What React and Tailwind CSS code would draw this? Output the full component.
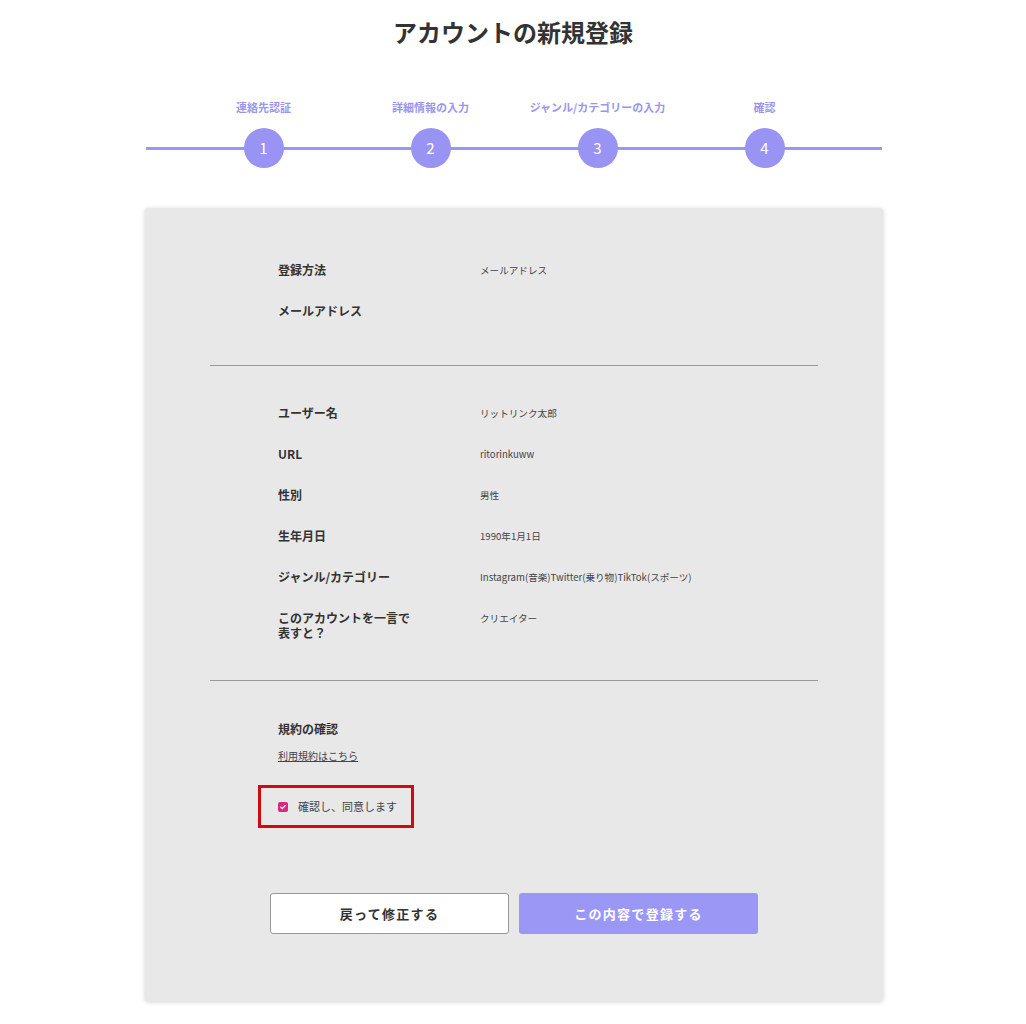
import React from "react";

const steps = ["連絡先認証", "詳細情報の入力", "ジャンル/カテゴリーの入力", "確認"];

const accountRows = [
  { label: "登録方法", value: "メールアドレス" },
  { label: "メールアドレス", value: "" },
];

const profileRows = [
  { label: "ユーザー名", value: "リットリンク太郎" },
  { label: "URL", value: "ritorinkuww" },
  { label: "性別", value: "男性" },
  { label: "生年月日", value: "1990年1月1日" },
  { label: "ジャンル/カテゴリー", value: "Instagram(音楽)Twitter(乗り物)TikTok(スポーツ)" },
];

const Row = ({ label, value }) => (
  <div className="grid grid-cols-[202px_1fr] items-center h-[20px]">
    <span className="text-[12px] font-bold text-[#333] leading-[20px]">{label}</span>
    <span className="text-[9.6px] text-[#444] leading-[20px]">{value}</span>
  </div>
);

const App = () => {
  return (
    <div
      className="w-[1026px] min-h-[1024px] bg-white"
      style={{ fontFamily: '"Noto Sans CJK JP", "Noto Sans", sans-serif' }}
    >
      <h1 className="pt-[14px] text-center text-[24px] font-bold leading-[36px] text-[#333]">
        アカウントの新規登録
      </h1>

      {/* stepper */}
      <div className="relative ml-[146px] mt-[49px] w-[736px]">
        <div className="absolute left-0 right-0 top-[48px] h-[3px] bg-[#9b97f0]" />
        <div className="relative mx-auto grid w-[668px] grid-cols-4">
          {steps.map((s, i) => (
            <div key={s} className="flex flex-col items-center">
              <span className="h-[16px] text-[11px] font-bold leading-[16px] text-[#9a96ee]">
                {s}
              </span>
              <div className="mt-[13px] flex h-[40px] w-[40px] items-center justify-center rounded-full bg-[#9994f3] text-[15px] text-white">
                {i + 1}
              </div>
            </div>
          ))}
        </div>
      </div>

      {/* card */}
      <div className="ml-[145px] mt-[40px] h-[793px] w-[738px] rounded-[3px] bg-[#e8e8e8] px-[65px] pt-[52px] shadow-[0_1px_5px_rgba(0,0,0,0.18)]">
        <div className="flex flex-col gap-[21px] pl-[68px]">
          {accountRows.map((r) => (
            <Row key={r.label} {...r} />
          ))}
        </div>

        <div className="mt-[44px] h-px bg-[#9a9a9a]" />

        <div className="mt-[37px] flex flex-col gap-[21px] pl-[68px]">
          {profileRows.map((r) => (
            <Row key={r.label} {...r} />
          ))}
          <div className="grid grid-cols-[202px_1fr] items-start">
            <span className="max-w-[135px] pt-[2px] text-[12px] font-bold leading-[15px] text-[#333]">
              このアカウントを一言で表すと？
            </span>
            <span className="text-[9.6px] leading-[20px] text-[#444]">クリエイター</span>
          </div>
        </div>

        <div className="mt-[40px] h-px bg-[#9a9a9a]" />

        <div className="mt-[38px] pl-[68px]">
          <p className="text-[12px] font-bold leading-[20px] text-[#333]">規約の確認</p>
          <a className="mt-[9px] block text-[10px] leading-[16px] text-[#444] underline">
            利用規約はこちら
          </a>
          <div className="-ml-[20px] mt-[21px] flex h-[43px] w-[156px] items-center gap-[10px] border-[3px] border-[#d10a10] pl-[17px]">
            <span className="flex h-[10px] w-[10px] items-center justify-center rounded-[2px] bg-[#d42a86]">
              <svg viewBox="0 0 10 10" className="h-[8px] w-[8px]">
                <path d="M2.2 5.2 L4.2 7 L7.8 3.2" fill="none" stroke="white" strokeWidth="1.6" strokeLinecap="round" strokeLinejoin="round" />
              </svg>
            </span>
            <span className="text-[11px] text-[#444]">確認し、同意します</span>
          </div>
        </div>

        <div className="mt-[65px] flex justify-center gap-[10px]">
          <button className="h-[41px] w-[239px] rounded-[3px] border border-[#999] bg-white text-[13px] font-bold tracking-[0.1em] text-[#333]">
            戻って修正する
          </button>
          <button className="h-[41px] w-[239px] rounded-[3px] bg-[#9b97f5] text-[13px] font-bold tracking-[0.1em] text-white">
            この内容で登録する
          </button>
        </div>
      </div>
    </div>
  );
};

export default App;
